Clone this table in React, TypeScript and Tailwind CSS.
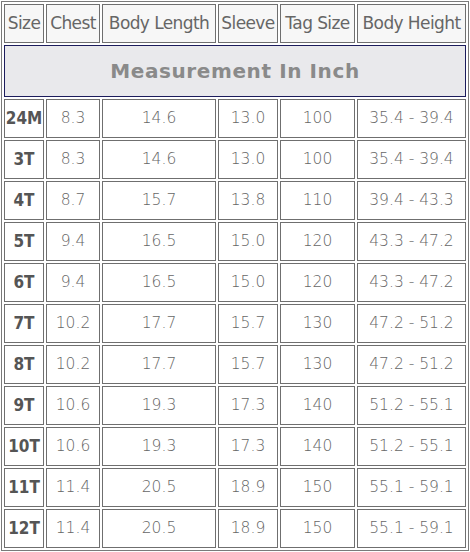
const headers = ['Size', 'Chest', 'Body Length', 'Sleeve', 'Tag Size', 'Body Height'];

const rows = [
  ['24M', '8.3', '14.6', '13.0', '100', '35.4 - 39.4'],
  ['3T', '8.3', '14.6', '13.0', '100', '35.4 - 39.4'],
  ['4T', '8.7', '15.7', '13.8', '110', '39.4 - 43.3'],
  ['5T', '9.4', '16.5', '15.0', '120', '43.3 - 47.2'],
  ['6T', '9.4', '16.5', '15.0', '120', '43.3 - 47.2'],
  ['7T', '10.2', '17.7', '15.7', '130', '47.2 - 51.2'],
  ['8T', '10.2', '17.7', '15.7', '130', '47.2 - 51.2'],
  ['9T', '10.6', '19.3', '17.3', '140', '51.2 - 55.1'],
  ['10T', '10.6', '19.3', '17.3', '140', '51.2 - 55.1'],
  ['11T', '11.4', '20.5', '18.9', '150', '55.1 - 59.1'],
  ['12T', '11.4', '20.5', '18.9', '150', '55.1 - 59.1'],
];

export default function App() {
  return (
    <div className="w-[470px] h-[552px] bg-white p-px">
      <div className="w-[468px] border border-[#7a7a7a] p-[2px] grid grid-cols-[40px_54px_114px_60px_75px_109px] grid-rows-[39px_52px_repeat(11,39px)] gap-[2px]">
        {headers.map((h) => (
          <div
            key={h}
            className="border border-[#6f6f6f] bg-[#f7f7f7] flex items-center justify-center text-[17px] text-[#666] whitespace-nowrap tracking-[-0.6px] font-['DejaVu_Sans',sans-serif]"
          >
            {h}
          </div>
        ))}

        <div className="col-span-6 border border-[#1c1c5c] bg-[#e9e9ec] flex items-center justify-center text-[20px] font-bold text-[#8a8a8a] tracking-[0.6px] font-['DejaVu_Sans',sans-serif]">
          Measurement In Inch
        </div>

        {rows.map((r) =>
          r.map((v, i) => (
            <div
              key={r[0] + i}
              className={
                i === 0
                  ? "border border-[#6f6f6f] bg-white flex items-center justify-center text-[17px] font-bold text-[#555] whitespace-nowrap font-stretch-condensed font-['DejaVu_Sans_Condensed','DejaVu_Sans',sans-serif]"
                  : "border border-[#6f6f6f] bg-white flex items-center justify-center text-[15.5px] font-extralight text-[#666] whitespace-nowrap font-['DejaVu_Sans',sans-serif]"
              }
            >
              {v}
            </div>
          ))
        )}
      </div>
    </div>
  );
}
